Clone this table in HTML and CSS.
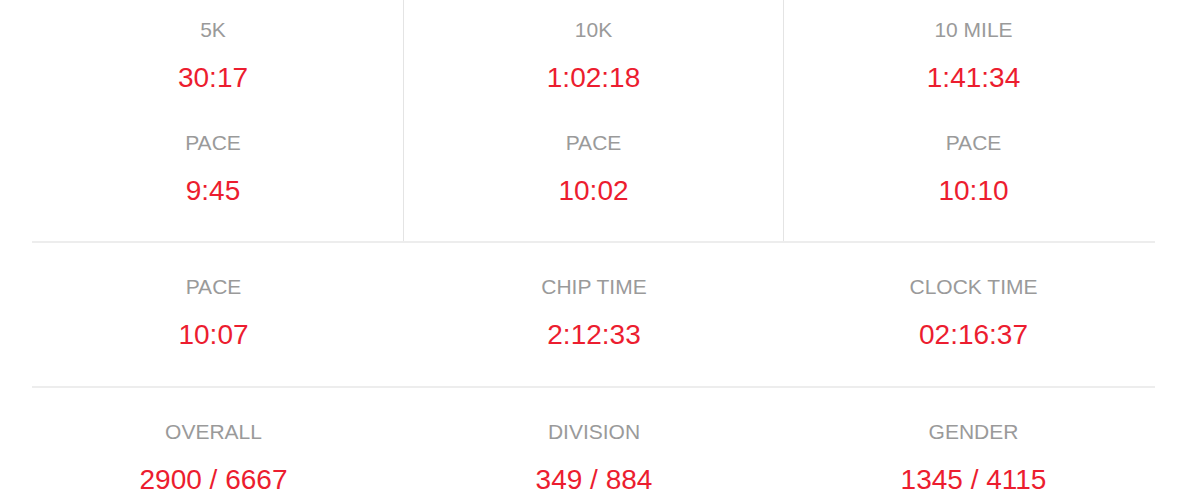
FILE: index.html
```html
<!DOCTYPE html>
<html lang="en">
<head>
<meta charset="utf-8">
<title>Race Results</title>
<link rel="stylesheet" href="styles.css">
</head>
<body>
<main class="board">
  <section class="row row-splits">
    <div class="cell split">
      <div class="stat"><div class="label">5K</div><div class="value">30:17</div></div>
      <div class="stat"><div class="label">PACE</div><div class="value">9:45</div></div>
    </div>
    <div class="cell split">
      <div class="stat"><div class="label">10K</div><div class="value">1:02:18</div></div>
      <div class="stat"><div class="label">PACE</div><div class="value">10:02</div></div>
    </div>
    <div class="cell">
      <div class="stat"><div class="label">10 MILE</div><div class="value">1:41:34</div></div>
      <div class="stat"><div class="label">PACE</div><div class="value">10:10</div></div>
    </div>
  </section>
  <hr class="rule">
  <section class="row row-times">
    <div class="cell">
      <div class="stat"><div class="label">PACE</div><div class="value">10:07</div></div>
    </div>
    <div class="cell">
      <div class="stat"><div class="label">CHIP TIME</div><div class="value">2:12:33</div></div>
    </div>
    <div class="cell">
      <div class="stat"><div class="label">CLOCK TIME</div><div class="value">02:16:37</div></div>
    </div>
  </section>
  <hr class="rule">
  <section class="row row-places">
    <div class="cell">
      <div class="stat"><div class="label">OVERALL</div><div class="value">2900 / 6667</div></div>
    </div>
    <div class="cell">
      <div class="stat"><div class="label">DIVISION</div><div class="value">349 / 884</div></div>
    </div>
    <div class="cell">
      <div class="stat"><div class="label">GENDER</div><div class="value">1345 / 4115</div></div>
    </div>
  </section>
</main>
</body>
</html>
```

FILE: styles.css
```css
html, body {
  margin: 0;
  padding: 0;
  background: #ffffff;
}

body {
  font-family: "Liberation Sans", Arial, Helvetica, sans-serif;
  overflow: hidden;
}

.board {
  width: 1140px;
  margin-left: 23px;
}

.row {
  display: grid;
  grid-template-columns: 381px 380px 379px;
  text-align: center;
}

.cell {
  display: flex;
  flex-direction: column;
  align-items: center;
  gap: 37px;
}

.row-splits .cell {
  padding: 18px 0 34px;
}

.row-splits .split {
  border-right: 1px solid #e4e4e4;
}

.row-times .cell {
  padding: 32px 0 35px;
}

.row-places .cell {
  padding: 32px 0 35px;
}

.stat {
  display: flex;
  flex-direction: column;
  align-items: center;
  gap: 20px;
}

.label {
  font-size: 21px;
  line-height: 24px;
  color: #9a9a9a;
}

.value {
  font-size: 28px;
  line-height: 32px;
  color: #ec1d2f;
}

.rule {
  border: 0;
  height: 2px;
  background: #ededed;
  margin: 0 8px 0 9px;
}
```
